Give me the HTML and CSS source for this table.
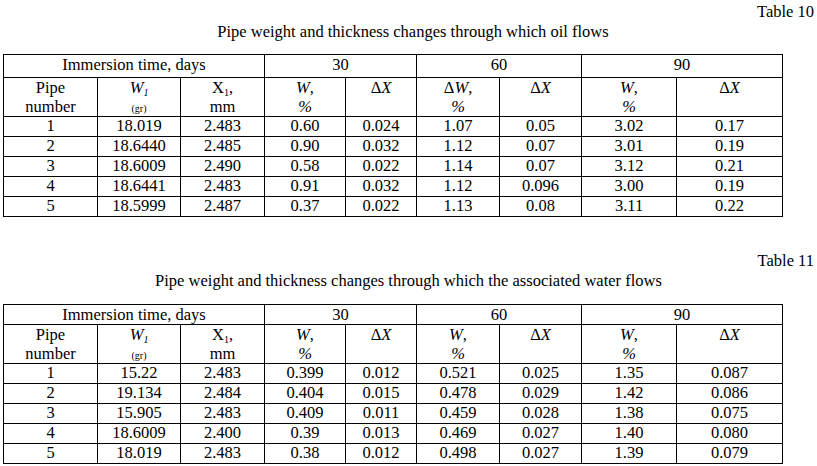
FILE: index.html
```html
<!DOCTYPE html>
<html>
<head>
<meta charset="utf-8">
<link rel="stylesheet" href="styles.css">
</head>
<body>
<section class="block">
  <div class="label">Table 10</div>
  <div class="title title-a">Pipe weight and thickness changes through which oil flows</div>
  <table class="data">
    <colgroup>
      <col class="c1"><col class="c2"><col class="c3"><col class="c4"><col class="c5"><col class="c6"><col class="c7"><col class="c8"><col class="c9">
    </colgroup>
    <tr class="head1 tall">
      <td colspan="3">Immersion time, days</td>
      <td colspan="2">30</td>
      <td colspan="2">60</td>
      <td colspan="2">90</td>
    </tr>
    <tr class="head2">
      <td>Pipe<br>number</td>
      <td><i>W<sub>1</sub></i><br><span class="small">(gr)</span></td>
      <td>X<sub class="up">1</sub>,<br>mm</td>
      <td><i>W</i>,<br><i>%</i></td>
      <td>Δ<i>X</i></td>
      <td>Δ<i>W</i>,<br><i>%</i></td>
      <td>Δ<i>X</i></td>
      <td><i>W</i>,<br><i>%</i></td>
      <td>Δ<i>X</i></td>
    </tr>
    <tr><td>1</td><td>18.019</td><td>2.483</td><td>0.60</td><td>0.024</td><td>1.07</td><td>0.05</td><td>3.02</td><td>0.17</td></tr>
    <tr><td>2</td><td>18.6440</td><td>2.485</td><td>0.90</td><td>0.032</td><td>1.12</td><td>0.07</td><td>3.01</td><td>0.19</td></tr>
    <tr><td>3</td><td>18.6009</td><td>2.490</td><td>0.58</td><td>0.022</td><td>1.14</td><td>0.07</td><td>3.12</td><td>0.21</td></tr>
    <tr><td>4</td><td>18.6441</td><td>2.483</td><td>0.91</td><td>0.032</td><td>1.12</td><td>0.096</td><td>3.00</td><td>0.19</td></tr>
    <tr><td>5</td><td>18.5999</td><td>2.487</td><td>0.37</td><td>0.022</td><td>1.13</td><td>0.08</td><td>3.11</td><td>0.22</td></tr>
  </table>
</section>
<section class="block second">
  <div class="label">Table 11</div>
  <div class="title">Pipe weight and thickness changes through which the associated water flows</div>
  <table class="data">
    <colgroup>
      <col class="c1"><col class="c2"><col class="c3"><col class="c4"><col class="c5"><col class="c6"><col class="c7"><col class="c8"><col class="c9">
    </colgroup>
    <tr class="head1">
      <td colspan="3">Immersion time, days</td>
      <td colspan="2">30</td>
      <td colspan="2">60</td>
      <td colspan="2">90</td>
    </tr>
    <tr class="head2">
      <td>Pipe<br>number</td>
      <td><i>W<sub>1</sub></i><br><span class="small">(gr)</span></td>
      <td>X<sub class="up">1</sub>,<br>mm</td>
      <td><i>W</i>,<br><i>%</i></td>
      <td>Δ<i>X</i></td>
      <td><i>W</i>,<br><i>%</i></td>
      <td>Δ<i>X</i></td>
      <td><i>W</i>,<br><i>%</i></td>
      <td>Δ<i>X</i></td>
    </tr>
    <tr><td>1</td><td>15.22</td><td>2.483</td><td>0.399</td><td>0.012</td><td>0.521</td><td>0.025</td><td>1.35</td><td>0.087</td></tr>
    <tr><td>2</td><td>19.134</td><td>2.484</td><td>0.404</td><td>0.015</td><td>0.478</td><td>0.029</td><td>1.42</td><td>0.086</td></tr>
    <tr><td>3</td><td>15.905</td><td>2.483</td><td>0.409</td><td>0.011</td><td>0.459</td><td>0.028</td><td>1.38</td><td>0.075</td></tr>
    <tr><td>4</td><td>18.6009</td><td>2.400</td><td>0.39</td><td>0.013</td><td>0.469</td><td>0.027</td><td>1.40</td><td>0.080</td></tr>
    <tr><td>5</td><td>18.019</td><td>2.483</td><td>0.38</td><td>0.012</td><td>0.498</td><td>0.027</td><td>1.39</td><td>0.079</td></tr>
  </table>
</section>
</body>
</html>
```

FILE: styles.css
```css
html, body {
  background: #ffffff;
}
body {
  margin: 0;
  padding: 2px 3px 0 3px;
  font-family: "Liberation Serif", "Times New Roman", serif;
  font-size: 16.5px;
  color: #000000;
}
.block.second {
  margin-top: 34px;
}
.label {
  text-align: right;
  line-height: 20px;
}
.title {
  text-align: center;
  line-height: 20px;
}
.title-a {
  padding-left: 9px;
}
.data {
  border-collapse: collapse;
  table-layout: fixed;
  width: 780px;
  margin-top: 12px;
}
.second .data {
  margin-top: 13px;
}
.c1 { width: 94px; }
.c2 { width: 83px; }
.c3 { width: 84px; }
.c4 { width: 81px; }
.c5 { width: 71px; }
.c6 { width: 83px; }
.c7 { width: 82px; }
.c8 { width: 95px; }
.c9 { width: 106px; }
.data td {
  border: 1px solid #000000;
  padding: 0;
  text-align: center;
  vertical-align: top;
  line-height: 17px;
}
.data tr {
  height: 20px;
}
.data tr.head1 {
  height: 19px;
}
.data tr.head1 td {
  line-height: 19px;
}
.data tr.head1.tall {
  height: 23px;
}
.data tr.head2 {
  height: 39px;
}
.data tr.head2 td {
  line-height: 19px;
}
sub {
  font-size: 10px;
  vertical-align: -3px;
  line-height: 0;
}
.small {
  font-size: 10px;
  line-height: 0;
}
```
